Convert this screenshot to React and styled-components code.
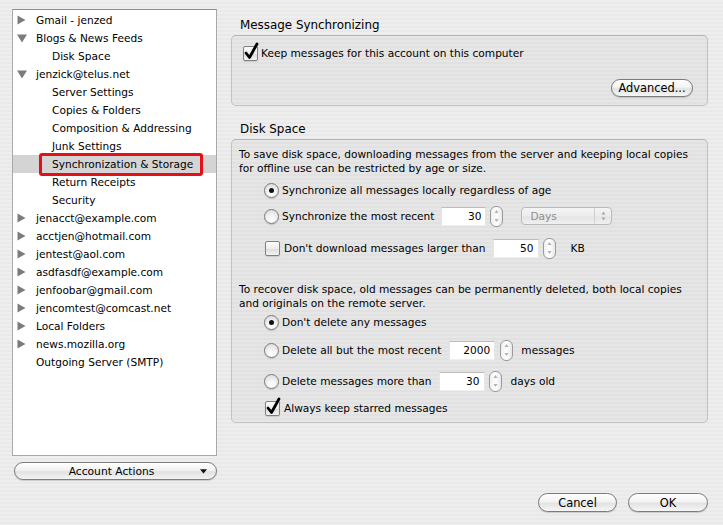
import React from 'react';
import styled, { createGlobalStyle, css } from 'styled-components';

const GlobalStyle = createGlobalStyle`
    html, body {
        margin: 0;
        padding: 0;
    }
    body {
        font-family: 'DejaVu Sans', 'Liberation Sans', sans-serif;
        font-size: 10.6px;
        color: #000;
        background: #ececec;
    }
`;

const accounts = [
    { label: 'Gmail - jenzed', twisty: 'closed' },
    { label: 'Blogs & News Feeds', twisty: 'open' },
    { label: 'Disk Space', child: true },
    { label: 'jenzick@telus.net', twisty: 'open' },
    { label: 'Server Settings', child: true },
    { label: 'Copies & Folders', child: true },
    { label: 'Composition & Addressing', child: true },
    { label: 'Junk Settings', child: true },
    { label: 'Synchronization & Storage', child: true, selected: true },
    { label: 'Return Receipts', child: true },
    { label: 'Security', child: true },
    { label: 'jenacct@example.com', twisty: 'closed' },
    { label: 'acctjen@hotmail.com', twisty: 'closed' },
    { label: 'jentest@aol.com', twisty: 'closed' },
    { label: 'asdfasdf@example.com', twisty: 'closed' },
    { label: 'jenfoobar@gmail.com', twisty: 'closed' },
    { label: 'jencomtest@comcast.net', twisty: 'closed' },
    { label: 'Local Folders', twisty: 'closed' },
    { label: 'news.mozilla.org', twisty: 'closed' },
    { label: 'Outgoing Server (SMTP)' },
];

const Twisty = ({ dir }) => (
    <TwistyBox>
        {dir === 'closed' && (
            <svg width="9" height="10" viewBox="0 0 9 10">
                <path d="M0.5 0.5 L8.5 5 L0.5 9.5 Z" fill="#7c7c7c" />
            </svg>
        )}
        {dir === 'open' && (
            <svg width="10" height="9" viewBox="0 0 10 9">
                <path d="M0 0.5 L10 0.5 L5 8.5 Z" fill="#7c7c7c" />
            </svg>
        )}
    </TwistyBox>
);

const CheckBox = ({ checked }) => (
    <Check>
        {checked && (
            <svg width="17" height="19" viewBox="0 0 17 19">
                <path
                    d="M3 11 L6.5 15.5 L14 2"
                    stroke="#000"
                    strokeWidth="2.8"
                    fill="none"
                    strokeLinecap="round"
                    strokeLinejoin="round"
                />
            </svg>
        )}
    </Check>
);

const Stepper = ({ $gap }) => (
    <Step $gap={$gap}>
        <svg width="7" height="18" viewBox="0 0 7 18">
            <path d="M1.5 6 L3.5 3 L5.5 6 Z" fill="#b0b0b0" />
            <path d="M1.5 12 L3.5 15 L5.5 12 Z" fill="#b0b0b0" />
        </svg>
    </Step>
);

export default function App() {
    return (
        <>
            <GlobalStyle />
            <Window>
                <Sidebar>
                    <TreeList>
                        {accounts.map((item, index) => (
                            <TreeRow key={`${item.label}_${index}`} $selected={item.selected}>
                                <Twisty dir={item.twisty} />
                                <TreeLabel $child={item.child}>{item.label}</TreeLabel>
                                {item.selected && <Marker />}
                            </TreeRow>
                        ))}
                    </TreeList>
                    <ActionsButton>
                        <span>Account Actions</span>
                        <svg width="9" height="6" viewBox="0 0 9 6">
                            <path d="M0 0 L9 0 L4.5 5.5 Z" fill="#111" />
                        </svg>
                    </ActionsButton>
                </Sidebar>

                <Main>
                    <SectionTitle>Message Synchronizing</SectionTitle>
                    <GroupBox $height={71} $pad="9px 14px 8px 11px">
                        <Row>
                            <CheckBox checked />
                            <Label $gap={3}>Keep messages for this account on this computer</Label>
                        </Row>
                        <ButtonRow>
                            <PillButton $width={82} $height={18}>Advanced...</PillButton>
                        </ButtonRow>
                    </GroupBox>

                    <SectionTitle $top={15}>Disk Space</SectionTitle>
                    <GroupBox $height={284} $pad="7px 8px 0 7px">
                        <Para>
                            To save disk space, downloading messages from the server and keeping
                            local copies for offline use can be restricted by age or size.
                        </Para>
                        <OptionRow $top={5} $height={20}>
                            <Radio $on />
                            <Label $gap={3}>Synchronize all messages locally regardless of age</Label>
                        </OptionRow>
                        <OptionRow $top={4} $height={24}>
                            <Radio />
                            <Label $gap={3}>Synchronize the most recent</Label>
                            <NumberField $gap={7} $width={45}>30</NumberField>
                            <Stepper $gap={4} />
                            <Popup>
                                <span>Days</span>
                                <PopupArrows>
                                    <svg width="7" height="12" viewBox="0 0 7 12">
                                        <path d="M1.5 4.5 L3.5 1.5 L5.5 4.5 Z" fill="#a8a8a8" />
                                        <path d="M1.5 7.5 L3.5 10.5 L5.5 7.5 Z" fill="#a8a8a8" />
                                    </svg>
                                </PopupArrows>
                            </Popup>
                        </OptionRow>
                        <OptionRow $top={9} $height={22} $indent={26}>
                            <CheckBox />
                            <Label $gap={4}>Don't download messages larger than</Label>
                            <NumberField $gap={7} $width={46}>50</NumberField>
                            <Stepper $gap={4} />
                            <Label $gap={15}>KB</Label>
                        </OptionRow>

                        <Para $top={23}>
                            To recover disk space, old messages can be permanently deleted, both
                            local copies and originals on the remote server.
                        </Para>
                        <OptionRow $top={2} $height={20}>
                            <Radio $on />
                            <Label $gap={3}>Don't delete any messages</Label>
                        </OptionRow>
                        <OptionRow $top={6} $height={24}>
                            <Radio />
                            <Label $gap={3}>Delete all but the most recent</Label>
                            <NumberField $gap={8} $width={46}>2000</NumberField>
                            <Stepper $gap={5} />
                            <Label $gap={8}>messages</Label>
                        </OptionRow>
                        <OptionRow $top={7} $height={24}>
                            <Radio />
                            <Label $gap={3}>Delete messages more than</Label>
                            <NumberField $gap={7} $width={46}>30</NumberField>
                            <Stepper $gap={4} />
                            <Label $gap={9}>days old</Label>
                        </OptionRow>
                        <OptionRow $top={5} $height={20} $indent={26}>
                            <CheckBox checked />
                            <Label $gap={4}>Always keep starred messages</Label>
                        </OptionRow>
                    </GroupBox>

                    <Footer>
                        <PillButton $width={79} $height={19}>Cancel</PillButton>
                        <PillButton $width={80} $height={19}>OK</PillButton>
                    </Footer>
                </Main>
            </Window>
        </>
    );
}

const pinstripe = css`
    background-color: #ececec;
    background-image: repeating-linear-gradient(
        to bottom,
        #eeeeee 0px,
        #eeeeee 2px,
        #e9e9e9 2px,
        #e9e9e9 4px
    );
`;

const Window = styled.div`
    width: 723px;
    height: 525px;
    display: flex;
    box-sizing: border-box;
    ${pinstripe};
`;

const Sidebar = styled.div`
    width: 205px;
    margin-left: 12px;
    padding-top: 9px;
    display: flex;
    flex-direction: column;
`;

const TreeList = styled.div`
    height: 447px;
    box-sizing: border-box;
    background: #fff;
    border: 1px solid #a9a9a9;
    border-top-color: #8e8e8e;
    padding-top: 1px;
`;

const TreeRow = styled.div`
    position: relative;
    height: 18px;
    display: flex;
    align-items: center;
    padding-left: 4px;
    ${(props) =>
        props.$selected &&
        css`
            background: #d4d4d4;
        `}
`;

const TwistyBox = styled.span`
    width: 19px;
    display: flex;
    align-items: center;
`;

const TreeLabel = styled.span`
    font-size: 10.6px;
    white-space: nowrap;
    padding-left: ${(props) => (props.$child ? '16px' : '0')};
`;

const Marker = styled.span`
    position: absolute;
    left: 26px;
    top: -2px;
    width: 164px;
    height: 23px;
    box-sizing: border-box;
    border: 3px solid #e3101a;
    border-radius: 3px;
`;

const ActionsButton = styled.div`
    margin-top: 6px;
    margin-left: 2px;
    width: 203px;
    height: 18px;
    box-sizing: border-box;
    border: 1px solid #7d7d7d;
    border-radius: 9px;
    background: linear-gradient(to bottom, #ffffff 0%, #f2f2f2 45%, #e2e2e2 55%, #f4f4f4 100%);
    box-shadow: 0 1px 1px rgba(0, 0, 0, 0.15);
    display: flex;
    align-items: center;
    padding: 0 9px 0 0;
    font-size: 10.7px;

    span {
        flex: 1;
        text-align: center;
        padding-left: 8px;
    }

    svg {
        width: 7px;
        height: 5px;
    }
`;

const Main = styled.div`
    width: 477px;
    margin-left: 14px;
    padding-top: 17px;
    display: flex;
    flex-direction: column;
`;

const SectionTitle = styled.div`
    font-size: 11.9px;
    line-height: 16px;
    height: 16px;
    padding-left: 9px;
    margin-top: ${(props) => props.$top || 0}px;
    margin-bottom: 2px;
`;

const GroupBox = styled.div`
    height: ${(props) => props.$height}px;
    box-sizing: border-box;
    padding: ${(props) => props.$pad};
    border: 1px solid #c2c2c2;
    border-top-color: #b3b3b3;
    border-radius: 5px;
    background-color: #e4e4e4;
    background-image: repeating-linear-gradient(
        to bottom,
        #e6e6e6 0px,
        #e6e6e6 2px,
        #e1e1e1 2px,
        #e1e1e1 4px
    );
    display: flex;
    flex-direction: column;
`;

const Row = styled.div`
    display: flex;
    align-items: center;
    height: 16px;
`;

const ButtonRow = styled.div`
    margin-top: auto;
    display: flex;
    justify-content: flex-end;
`;

const Label = styled.span`
    margin-left: ${(props) => props.$gap || 0}px;
    white-space: nowrap;
`;

const Para = styled.p`
    margin: ${(props) => props.$top || 0}px 0 0 0;
    line-height: 14px;
    width: 460px;
`;

const OptionRow = styled.div`
    display: flex;
    align-items: center;
    height: ${(props) => props.$height}px;
    margin-top: ${(props) => props.$top}px;
    padding-left: ${(props) => props.$indent || 25}px;
`;

const Check = styled.span`
    position: relative;
    width: 15px;
    height: 15px;
    box-sizing: border-box;
    border: 1px solid #808080;
    border-radius: 2px;
    background: linear-gradient(to bottom, #fdfdfd 0%, #eeeeee 50%, #dedede 55%, #f3f3f3 100%);
    box-shadow: 0 1px 1px rgba(0, 0, 0, 0.12);
    flex: none;

    svg {
        position: absolute;
        left: -1px;
        top: -5px;
    }
`;

const Radio = styled.span`
    position: relative;
    width: 15px;
    height: 15px;
    box-sizing: border-box;
    border: 1px solid #7a7a7a;
    border-radius: 50%;
    background: radial-gradient(circle at 50% 75%, #ffffff 0%, #f2f2f2 40%, #d6d6d6 100%);
    box-shadow: 0 1px 1px rgba(0, 0, 0, 0.15);
    flex: none;

    ${(props) =>
        props.$on &&
        css`
            &:after {
                content: '';
                position: absolute;
                left: 4px;
                top: 4px;
                width: 5px;
                height: 5px;
                border-radius: 50%;
                background: #111;
            }
        `}
`;

const NumberField = styled.span`
    margin-left: ${(props) => props.$gap}px;
    width: ${(props) => props.$width}px;
    height: 19px;
    box-sizing: border-box;
    background: #fff;
    border-top: 1px solid #bdbdbd;
    border-left: 1px solid #e6e6e6;
    border-right: 1px solid #e6e6e6;
    border-bottom: 1px solid #efefef;
    text-align: right;
    padding-right: 4px;
    line-height: 17px;
    flex: none;
`;

const Step = styled.span`
    margin-left: ${(props) => props.$gap}px;
    width: 13px;
    height: 21px;
    box-sizing: border-box;
    border: 1px solid #9a9a9a;
    border-radius: 6px;
    background: linear-gradient(to right, #f0f0f0, #ffffff 50%, #e8e8e8);
    display: flex;
    align-items: center;
    justify-content: center;
    flex: none;
`;

const Popup = styled.span`
    margin-left: 18px;
    width: 91px;
    height: 18px;
    box-sizing: border-box;
    border: 1px solid #b9b9b9;
    border-radius: 4px;
    background: linear-gradient(to bottom, #f4f4f4, #ececec 50%, #e4e4e4 55%, #f0f0f0);
    color: #8e8e8e;
    display: flex;
    align-items: center;
    padding-left: 8px;
    flex: none;

    span {
        flex: 1;
    }
`;

const PopupArrows = styled.div`
    width: 16px;
    height: 100%;
    border-left: 1px solid #d0d0d0;
    display: flex;
    align-items: center;
    justify-content: center;
`;

const PillButton = styled.div`
    width: ${(props) => props.$width}px;
    height: ${(props) => props.$height}px;
    box-sizing: border-box;
    border: 1px solid #7b7b7b;
    border-radius: 10px;
    background: linear-gradient(to bottom, #ffffff 0%, #f3f3f3 45%, #e3e3e3 55%, #f6f6f6 100%);
    box-shadow: 0 1px 1px rgba(0, 0, 0, 0.15);
    display: flex;
    align-items: center;
    justify-content: center;
    font-size: 11.4px;
`;

const Footer = styled.div`
    margin-top: auto;
    margin-bottom: 13px;
    display: flex;
    justify-content: flex-end;
    gap: 11px;
`;
